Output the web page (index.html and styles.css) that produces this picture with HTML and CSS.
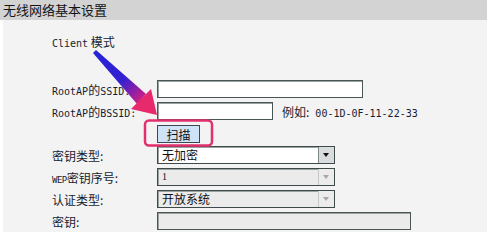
FILE: index.html
```html
<html>
  <head>
    <meta charset="utf-8" />
    <title>无线网络基本设置</title>
    <link rel="stylesheet" href="styles.css">
  </head>
  <body>
    <div class="page">
      <div class="caption">无线网络基本设置</div>

      <div class="panel">
        <div class="mode"><span class="en">Client</span> 模式</div>

        <div class="form">
          <div class="label"><span class="en">RootAP</span>的<span class="en">SSID:</span></div>
          <div class="field"><input class="text ssid" type="text"></div>

          <div class="label"><span class="en">RootAP</span>的<span class="en">BSSID:</span></div>
          <div class="field">
            <input class="text bssid" type="text">
            <span class="hint">例如:<span class="en"> 00-1D-0F-11-22-33</span></span>
          </div>

          <div class="label"></div>
          <div class="field"><button class="scan">扫描</button></div>

          <div class="label">密钥类型:</div>
          <div class="field">
            <div class="select">
              <span class="value">无加密</span>
              <span class="drop"></span>
            </div>
          </div>

          <div class="label"><span class="en small">WEP</span>密钥序号:</div>
          <div class="field">
            <div class="select disabled">
              <span class="value num">1</span>
              <span class="drop"></span>
            </div>
          </div>

          <div class="label">认证类型:</div>
          <div class="field">
            <div class="select disabled">
              <span class="value">开放系统</span>
              <span class="drop"></span>
            </div>
          </div>

          <div class="label">密钥:</div>
          <div class="field"><input class="text key" type="text" disabled></div>
        </div>
      </div>

      <!-- annotation drawn over the form -->
      <svg class="marks" width="495" height="247" viewBox="0 0 495 247">
        <defs>
          <linearGradient id="shaft" x1="95" y1="51" x2="141" y2="99" gradientUnits="userSpaceOnUse">
            <stop offset="0" stop-color="#2424d8" />
            <stop offset="0.6" stop-color="#3420d0" />
            <stop offset="1" stop-color="#c8208a" />
          </linearGradient>
        </defs>
        <polygon points="93,53 96,50 146,94 137,104" fill="url(#shaft)" />
        <polygon points="151,89 131,109 157,115" fill="#e62a6c" />
        <rect x="145" y="120.5" width="67" height="25" rx="4" ry="4" fill="none" stroke="#e2306e" stroke-width="2.5" />
      </svg>
    </div>
  </body>
</html>
```

FILE: styles.css
```css
html, body {
  margin: 0;
  background-color: #ffffff;
}

body {
  font-family: "Noto Sans CJK SC", "Liberation Sans", sans-serif;
  color: #161c30;
}

.page {
  position: relative;
  width: 487px;
  height: 247px;
}

.caption {
  height: 20px;
  line-height: 19px;
  padding-left: 3px;
  background-color: #d3d3d3;
  font-size: 13px;
  color: #141414;
}

.panel {
  height: 212px;
  margin-left: 3px;
  padding: 12px 0 0 49px;
  box-sizing: border-box;
  background-color: #f3f3f3;
}

.en {
  font-family: "DejaVu Sans Mono", "Liberation Mono", monospace;
  font-size: 10px;
}
.en.small {
  font-size: 9px;
  letter-spacing: -0.5px;
}

.mode {
  height: 20px;
  line-height: 20px;
  font-size: 12px;
  margin-bottom: 26px;
}

.form {
  display: grid;
  grid-template-columns: 105px 1fr;
  grid-auto-rows: 22px;
  align-items: center;
}

.label {
  font-size: 12px;
  white-space: nowrap;
}

.field {
  display: flex;
  align-items: center;
}

.text {
  height: 18px;
  box-sizing: border-box;
  margin: 0;
  padding: 0 3px;
  border: 1px solid #4a5656;
  box-shadow: inset 1px 1px 0 #9aa2a2;
  background-color: #ffffff;
}
.ssid { width: 206px; }
.bssid { width: 116px; }
.key {
  width: 254px;
  background-color: #ebebeb;
}

.hint {
  margin-left: 9px;
  font-size: 12px;
}

.scan {
  width: 43px;
  height: 18px;
  margin: 2px 0 0 0;
  padding: 0;
  border: 1px solid #3c4656;
  background-color: #cfe3f7;
  font-family: "Noto Sans CJK SC", sans-serif;
  font-size: 12px;
  line-height: 15px;
  color: #111111;
}

.select {
  width: 178px;
  height: 18px;
  box-sizing: border-box;
  display: flex;
  border: 1px solid #3f4a4a;
  box-shadow: inset 1px 1px 0 #9aa2a2;
  background-color: #ffffff;
}
.select .value {
  flex: 1 1 0;
  padding-left: 4px;
  font-size: 12px;
  line-height: 16px;
  color: #111111;
}
.select .value.num {
  font-family: "Liberation Serif", serif;
  font-size: 10px;
}
.select .drop {
  position: relative;
  width: 15px;
  border-left: 1px solid #7d8686;
  background-color: #d9dcdc;
}
.select .drop::after {
  content: "";
  position: absolute;
  left: 4px;
  top: 6px;
  border-left: 3.5px solid transparent;
  border-right: 3.5px solid transparent;
  border-top: 4px solid #111111;
}

.select.disabled {
  background-color: #ebebeb;
}
.select.disabled .drop {
  background-color: #ececec;
  border-left-color: #c4c8c8;
}
.select.disabled .drop::after {
  border-top-color: #a8a8a8;
}

.marks {
  position: absolute;
  left: 0;
  top: 0;
  pointer-events: none;
}
```
